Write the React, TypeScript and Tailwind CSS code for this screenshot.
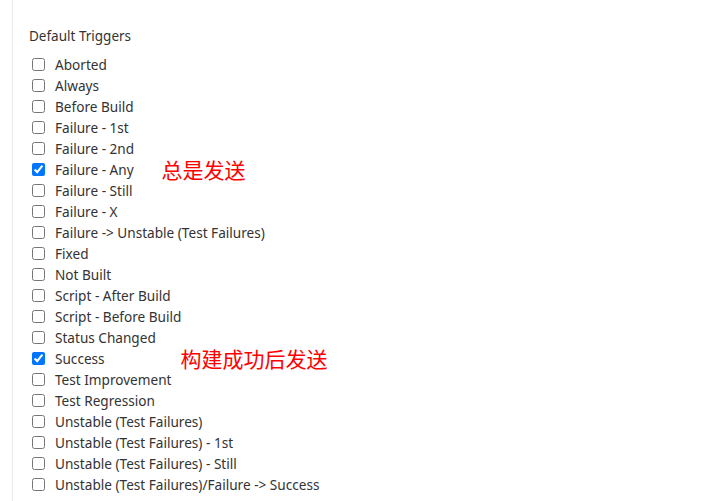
import React from "react";

const items: { label: string; checked?: boolean; note?: string }[] = [
  { label: "Aborted" },
  { label: "Always" },
  { label: "Before Build" },
  { label: "Failure - 1st" },
  { label: "Failure - 2nd" },
  { label: "Failure - Any", checked: true, note: "总是发送" },
  { label: "Failure - Still" },
  { label: "Failure - X" },
  { label: "Failure -> Unstable (Test Failures)" },
  { label: "Fixed" },
  { label: "Not Built" },
  { label: "Script - After Build" },
  { label: "Script - Before Build" },
  { label: "Status Changed" },
  { label: "Success", checked: true, note: "构建成功后发送" },
  { label: "Test Improvement" },
  { label: "Test Regression" },
  { label: "Unstable (Test Failures)" },
  { label: "Unstable (Test Failures) - 1st" },
  { label: "Unstable (Test Failures) - Still" },
  { label: "Unstable (Test Failures)/Failure -> Success" },
];

export default function App() {
  return (
    <div
      className="w-[701px] h-[501px] overflow-hidden bg-white text-[#333]"
      style={{ fontFamily: '"Noto Sans", "Open Sans", sans-serif' }}
    >
      <div className="ml-[12px] h-full border-l border-[#e6e9ed] pl-[16px] pt-[26px]">
        <div className="text-[13.5px] leading-[20px]">Default Triggers</div>
        <div className="mt-[8px] flex flex-col">
          {items.map((it) => (
            <div key={it.label} className="flex h-[21px] items-center">
              <input
                type="checkbox"
                defaultChecked={!!it.checked}
                className="ml-[3px] h-[13px] w-[13px]"
              />
              <span className="ml-[10px] text-[13.6px] leading-[21px]">{it.label}</span>
              {it.note && (
                <span
                  className={
                    it.label === "Success"
                      ? "ml-[76px] text-[21px] leading-[21px] text-[#ff0000]"
                      : "ml-[28px] text-[21px] leading-[21px] text-[#ff0000]"
                  }
                  style={{ fontFamily: '"Noto Sans CJK SC", sans-serif' }}
                >
                  {it.note}
                </span>
              )}
            </div>
          ))}
        </div>
      </div>
    </div>
  );
}
